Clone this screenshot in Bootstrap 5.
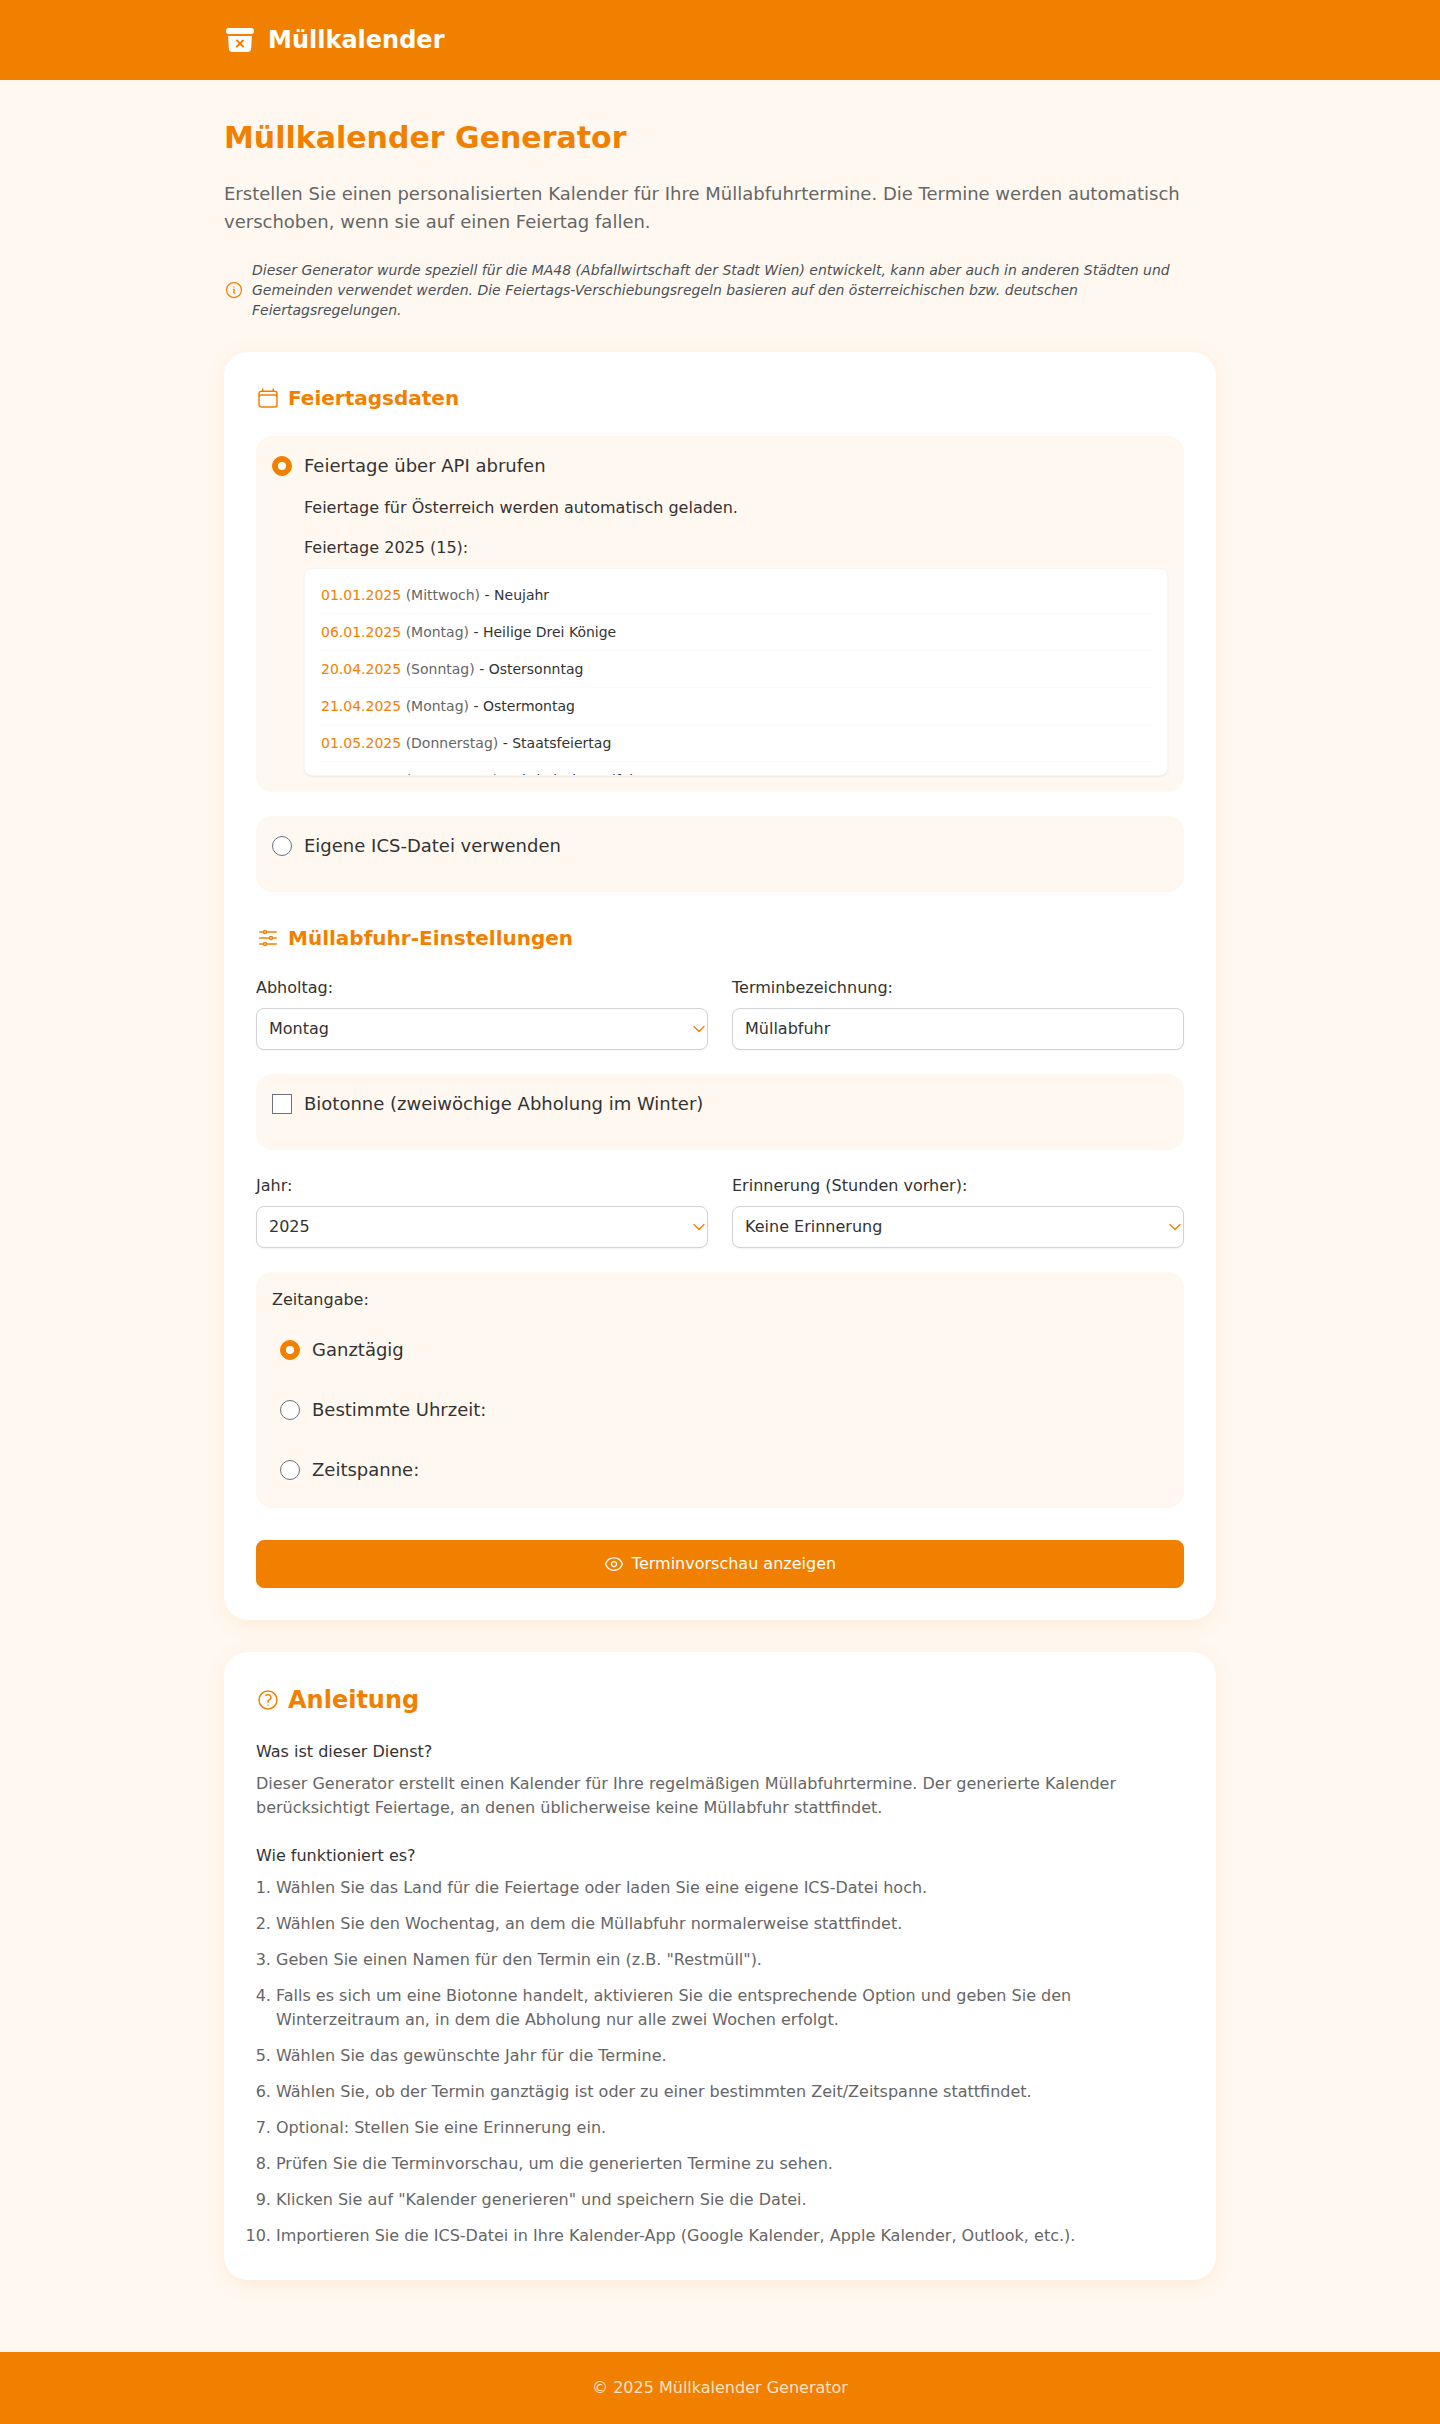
<!DOCTYPE html>
<html lang="de">
<head>
<meta charset="utf-8">
<meta name="viewport" content="width=device-width, initial-scale=1">
<title>Müllkalender Generator</title>
<link href="https://cdn.jsdelivr.net/npm/bootstrap@5.3.0/dist/css/bootstrap.min.css" rel="stylesheet">
<style>
:root{--brand:#f28000;--cream:#fff8f0;--ink:#333;--muted:#666}
body{font-family:"DejaVu Sans",sans-serif;background:var(--cream);color:var(--ink);font-size:16px;line-height:24px}
.page-width{max-width:1024px;padding:0 16px;margin:0 auto;width:100%}
.topbar{background:var(--brand);height:80px}
.brand-name{font-size:24px;line-height:32px}
.brand-text{color:var(--brand)}
.page-title{font-size:30px;line-height:36px}
.intro{font-size:18px;line-height:28px;color:var(--muted)}
.hint{font-size:14px;line-height:20px;color:#4b5058}
.ico{width:24px;height:24px;flex:none;fill:none;stroke:currentColor;stroke-width:1.5;stroke-linecap:round;stroke-linejoin:round}
.ico-sm{width:20px;height:20px}
.panel{background:#fff;border-radius:24px;padding:32px;margin-bottom:32px;box-shadow:0 4px 20px rgba(243,128,0,.1)}
.section-title{font-size:20px;line-height:28px}
.section-title-lg{font-size:24px;line-height:32px}
.soft-box{background:var(--cream);border-radius:16px}
.choice{min-height:28px;padding:0;margin:0 0 16px;font-size:18px;line-height:28px;display:flex;align-items:center;gap:12px}
.choice .form-check-input{float:none;margin:0;width:20px;height:20px;border:1px solid #6b7280;background-color:#fff;flex:none}
.choice .form-check-input[type=checkbox]{border-radius:0}
.choice .form-check-input:checked{background-color:var(--brand);border-color:var(--brand);background-image:url("data:image/svg+xml,%3csvg viewBox='0 0 16 16' fill='white' xmlns='http://www.w3.org/2000/svg'%3e%3ccircle cx='8' cy='8' r='3.6'/%3e%3c/svg%3e")}
.sub{padding-left:32px}
.day,.muted-copy{color:var(--muted)}
.holidays{height:208px;overflow:hidden;background:#fff;border:1px solid #f5f5f5;border-radius:8px;padding:8px 16px;font-size:14px;line-height:20px;box-shadow:0 1px 2px rgba(0,0,0,.06)}
.holidays li{padding:8px 0;border-bottom:1px solid #f9fafb}
.field{height:42px;border:1px solid #d1d3d6;border-radius:8px;padding:8px 12px;color:var(--ink);line-height:24px;font-size:16px;box-shadow:0 1px 2px rgba(0,0,0,.05)}
.form-control.field{padding:7px 12px 9px}
.form-select.field{background-image:url("data:image/svg+xml,%3csvg xmlns='http://www.w3.org/2000/svg' fill='none' viewBox='0 0 24 24' stroke='%23f28000' stroke-width='2' stroke-linecap='round' stroke-linejoin='round'%3e%3cpath d='M19.5 8.25l-7.5 7.5-7.5-7.5'/%3e%3c/svg%3e");background-size:16px;background-position:right center}
.times .choice{margin:0;padding:8px}
.btn-brand{--bs-btn-color:#fff;--bs-btn-bg:var(--brand);--bs-btn-border-color:var(--brand);--bs-btn-hover-bg:#dc7300;--bs-btn-hover-color:#fff;height:48px;border-radius:8px;font-size:16px}
.steps{padding-left:20px;gap:12px;color:var(--muted)}
.page-foot{background:var(--brand);height:72px;color:rgba(255,255,255,.8)}
</style>
</head>
<body>
<header class="topbar d-flex align-items-center">
  <div class="page-width d-flex align-items-center text-white">
    <svg width="32" height="32" viewBox="0 0 24 24" fill="currentColor"><path d="M3.375 3C2.339 3 1.5 3.84 1.5 4.875v.75c0 1.036.84 1.875 1.875 1.875h17.25c1.035 0 1.875-.84 1.875-1.875v-.75C22.5 3.839 21.66 3 20.625 3H3.375z"/><path fill-rule="evenodd" d="M3.087 9l.54 9.176A3 3 0 006.62 21h10.757a3 3 0 002.995-2.824L20.913 9H3.087zm6.133 2.845a.75.75 0 011.06 0l1.72 1.72 1.72-1.72a.75.75 0 111.06 1.06l-1.72 1.72 1.72 1.72a.75.75 0 11-1.06 1.06L12 15.685l-1.72 1.72a.75.75 0 11-1.06-1.06l1.72-1.72-1.72-1.72a.75.75 0 010-1.06z"/></svg>
    <span class="brand-name fw-bold ms-2 ps-1">Müllkalender</span>
  </div>
</header>

<main class="page-width pt-4 pb-4">
  <div class="pt-3 pb-2">
    <h1 class="page-title brand-text fw-bold mb-4">Müllkalender Generator</h1>
    <p class="intro mb-4">Erstellen Sie einen personalisierten Kalender für Ihre Müllabfuhrtermine. Die Termine werden automatisch verschoben, wenn sie auf einen Feiertag fallen.</p>
    <div class="hint d-flex align-items-center gap-2 fst-italic mb-4">
      <svg class="ico ico-sm brand-text" viewBox="0 0 24 24"><path d="M11.25 11.25l.041-.02a.75.75 0 011.063.852l-.708 2.836a.75.75 0 001.063.853l.041-.021M21 12a9 9 0 11-18 0 9 9 0 0118 0zm-9-3.75h.008v.008H12V8.25z"/></svg>
      <span>Dieser Generator wurde speziell für die MA48 (Abfallwirtschaft der Stadt Wien) entwickelt, kann aber auch in anderen Städten und Gemeinden verwendet werden. Die Feiertags-Verschiebungsregeln basieren auf den österreichischen bzw. deutschen Feiertagsregelungen.</span>
    </div>
  </div>

  <section class="panel">
    <h2 class="section-title brand-text fw-bold d-flex align-items-center gap-2 mb-4">
      <svg class="ico" viewBox="0 0 24 24"><path d="M6.75 3v2.25M17.25 3v2.25M3 18.75V7.5a2.25 2.25 0 012.25-2.25h13.5A2.25 2.25 0 0121 7.5v11.25m-18 0A2.25 2.25 0 005.25 21h13.5A2.25 2.25 0 0021 18.75m-18 0v-7.5A2.25 2.25 0 015.25 9h13.5A2.25 2.25 0 0121 11.25v7.5"/></svg>
      Feiertagsdaten
    </h2>
    <div class="soft-box p-3 mb-4">
      <label class="choice form-check"><input class="form-check-input" type="radio" name="quelle" checked>Feiertage über API abrufen</label>
      <div class="sub">
        <p class="mb-3">Feiertage für Österreich werden automatisch geladen.</p>
        <p class="mb-2">Feiertage 2025 (15):</p>
        <ul class="holidays list-unstyled mb-0">
          <li><span class="brand-text">01.01.2025</span> <span class="day">(Mittwoch)</span> - Neujahr</li>
          <li><span class="brand-text">06.01.2025</span> <span class="day">(Montag)</span> - Heilige Drei Könige</li>
          <li><span class="brand-text">20.04.2025</span> <span class="day">(Sonntag)</span> - Ostersonntag</li>
          <li><span class="brand-text">21.04.2025</span> <span class="day">(Montag)</span> - Ostermontag</li>
          <li><span class="brand-text">01.05.2025</span> <span class="day">(Donnerstag)</span> - Staatsfeiertag</li>
          <li><span class="brand-text">29.05.2025</span> <span class="day">(Donnerstag)</span> - Christi Himmelfahrt</li>
        </ul>
      </div>
    </div>
    <div class="soft-box p-3 mb-4">
      <label class="choice form-check"><input class="form-check-input" type="radio" name="quelle">Eigene ICS-Datei verwenden</label>
    </div>

    <h2 class="section-title brand-text fw-bold d-flex align-items-center gap-2 mb-4 pt-2">
      <svg class="ico" viewBox="0 0 24 24"><path d="M10.5 6h9.75M10.5 6a1.5 1.5 0 11-3 0m3 0a1.5 1.5 0 10-3 0M3.75 6H7.5m3 12h9.75m-9.75 0a1.5 1.5 0 01-3 0m3 0a1.5 1.5 0 00-3 0m-3.75 0H7.5m9-6h3.75m-3.75 0a1.5 1.5 0 01-3 0m3 0a1.5 1.5 0 00-3 0m-9.75 0h9.75"/></svg>
      Müllabfuhr-Einstellungen
    </h2>
    <div class="row mb-4">
      <div class="col-6">
        <label class="d-block mb-2" for="tag">Abholtag:</label>
        <select class="form-select field" id="tag"><option>Montag</option></select>
      </div>
      <div class="col-6">
        <label class="d-block mb-2" for="name">Terminbezeichnung:</label>
        <input class="form-control field" id="name" value="Müllabfuhr">
      </div>
    </div>
    <div class="soft-box p-3 mb-4">
      <label class="choice form-check"><input class="form-check-input" type="checkbox">Biotonne (zweiwöchige Abholung im Winter)</label>
    </div>
    <div class="row mb-4">
      <div class="col-6">
        <label class="d-block mb-2" for="jahr">Jahr:</label>
        <select class="form-select field" id="jahr"><option>2025</option></select>
      </div>
      <div class="col-6">
        <label class="d-block mb-2" for="erinnerung">Erinnerung (Stunden vorher):</label>
        <select class="form-select field" id="erinnerung"><option>Keine Erinnerung</option></select>
      </div>
    </div>
    <div class="soft-box p-3">
      <div class="mb-3">Zeitangabe:</div>
      <div class="times d-flex flex-column gap-3">
        <label class="choice form-check"><input class="form-check-input" type="radio" name="zeit" checked>Ganztägig</label>
        <label class="choice form-check"><input class="form-check-input" type="radio" name="zeit">Bestimmte Uhrzeit:</label>
        <label class="choice form-check"><input class="form-check-input" type="radio" name="zeit">Zeitspanne:</label>
      </div>
    </div>
    <div class="pt-2 mt-4">
      <button class="btn btn-brand w-100 d-flex align-items-center justify-content-center gap-2" type="button">
        <svg class="ico ico-sm" viewBox="0 0 24 24"><path d="M2.036 12.322a1.012 1.012 0 010-.639C3.423 7.51 7.36 4.5 12 4.5c4.638 0 8.573 3.007 9.963 7.178.07.207.07.431 0 .639C20.577 16.49 16.64 19.5 12 19.5c-4.638 0-8.573-3.007-9.963-7.178z"/><path d="M15 12a3 3 0 11-6 0 3 3 0 016 0z"/></svg>
        Terminvorschau anzeigen
      </button>
    </div>
  </section>

  <section class="panel">
    <h2 class="section-title-lg brand-text fw-bold d-flex align-items-center gap-2 mb-4">
      <svg class="ico" viewBox="0 0 24 24"><path d="M9.879 7.519c1.171-1.025 3.071-1.025 4.242 0 1.172 1.025 1.172 2.687 0 3.712-.203.179-.43.326-.67.442-.745.361-1.45.999-1.45 1.827v.75M21 12a9 9 0 11-18 0 9 9 0 0118 0zm-9 5.25h.008v.008H12v-.008z"/></svg>
      Anleitung
    </h2>
    <div class="mb-2">Was ist dieser Dienst?</div>
    <p class="mb-4 muted-copy">Dieser Generator erstellt einen Kalender für Ihre regelmäßigen Müllabfuhrtermine. Der generierte Kalender berücksichtigt Feiertage, an denen üblicherweise keine Müllabfuhr stattfindet.</p>
    <div class="mb-2">Wie funktioniert es?</div>
    <ol class="steps d-flex flex-column mb-0">
      <li>Wählen Sie das Land für die Feiertage oder laden Sie eine eigene ICS-Datei hoch.</li>
      <li>Wählen Sie den Wochentag, an dem die Müllabfuhr normalerweise stattfindet.</li>
      <li>Geben Sie einen Namen für den Termin ein (z.B. "Restmüll").</li>
      <li>Falls es sich um eine Biotonne handelt, aktivieren Sie die entsprechende Option und geben Sie den Winterzeitraum an, in dem die Abholung nur alle zwei Wochen erfolgt.</li>
      <li>Wählen Sie das gewünschte Jahr für die Termine.</li>
      <li>Wählen Sie, ob der Termin ganztägig ist oder zu einer bestimmten Zeit/Zeitspanne stattfindet.</li>
      <li>Optional: Stellen Sie eine Erinnerung ein.</li>
      <li>Prüfen Sie die Terminvorschau, um die generierten Termine zu sehen.</li>
      <li>Klicken Sie auf "Kalender generieren" und speichern Sie die Datei.</li>
      <li>Importieren Sie die ICS-Datei in Ihre Kalender-App (Google Kalender, Apple Kalender, Outlook, etc.).</li>
    </ol>
  </section>
</main>
<footer class="page-foot d-flex align-items-center justify-content-center mt-3">© 2025 Müllkalender Generator</footer>
<script src="https://cdn.jsdelivr.net/npm/bootstrap@5.3.0/dist/js/bootstrap.bundle.min.js"></script>
</body>
</html>
